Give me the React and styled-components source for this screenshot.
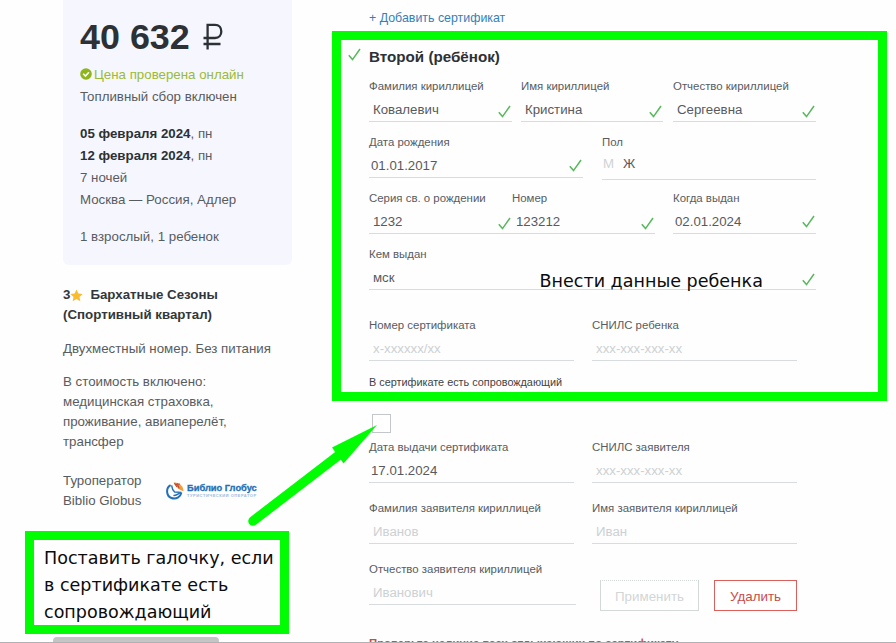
import React from 'react';
import styled, { createGlobalStyle, css } from 'styled-components';

const GlobalStyle = createGlobalStyle`
  * { box-sizing: border-box; }
  body { margin: 0; background: #fefefe; }
`;

const lime = '#00fd02';

const Page = styled.div`
  position: relative;
  display: flex;
  width: 896px;
  height: 643px;
  overflow: hidden;
  background: #fefefe;
  color: #585c61;
  font-family: "Liberation Sans", Arial, sans-serif;
  font-size: 13.3px;
`;

/* ---- Tour summary ---- */

const Sidebar = styled.aside`
  flex: none;
  width: 229px;
  margin-left: 63px;
`;

const Card = styled.section`
  height: 265px;
  padding: 17px 0 0 17px;
  background: #f6f7fe;
  border-radius: 0 0 6px 6px;
`;

const Price = styled.div`
  display: flex;
  gap: 13px;
  height: 40px;
  line-height: 40px;
  margin-bottom: 6px;
  color: #2c3136;
  font-size: 35.9px;
  font-weight: 700;
  white-space: nowrap;
`;

const Currency = styled.svg`
  width: 20px;
  height: 27px;
  margin-top: 6px;
`;

const CardLine = styled.div`
  display: flex;
  align-items: center;
  height: 22px;
  margin-top: ${(p) => p.$gap || 0}px;
  color: ${(p) => p.$color || 'inherit'};
  white-space: pre;
  svg { margin-right: 2px; }
`;

const Strong = styled.b`
  color: #2c3136;
`;

const HotelName = styled.h3`
  margin: 20px 0 0;
  font-size: 13.3px;
  line-height: 20px;
  color: #33373b;
`;

const HotelLine = styled.span`
  display: flex;
  align-items: center;
  height: 20px;
  white-space: nowrap;
`;

const Star = styled.svg`
  width: 13px;
  height: 13px;
  margin: 0 7px 0 0;
`;

const Paragraph = styled.p`
  margin: ${(p) => p.$gap}px 0 0;
  line-height: 20px;
  white-space: pre-line;
`;

const Operator = styled.div`
  display: flex;
  margin-top: 19px;
  line-height: 20px;
`;

const OperatorName = styled.div`
  width: 103px;
  white-space: pre-line;
`;

const Logo = styled.div`
  display: flex;
  gap: 3px;
  margin-top: 11px;
  height: 18px;
`;

const LogoText = styled.div`
  color: #2470b5;
  font-size: 9.3px;
  font-weight: 700;
  line-height: 11px;
  padding-top: 1px;
  white-space: nowrap;
  -webkit-text-stroke: 0.3px #2470b5;
`;

const LogoTagline = styled.div`
  color: #9dbadb;
  font-size: 4px;
  line-height: 4px;
  letter-spacing: 0.53px;
  -webkit-text-stroke: 0;
`;

/* ---- Passenger form ---- */

const Form = styled.main`
  flex: none;
  width: 448px;
  margin-left: 77px;
`;

const AddLink = styled.a`
  display: block;
  margin-top: 10px;
  line-height: 16px;
  font-size: 12.4px;
  color: #3580bb;
`;

const Heading = styled.h2`
  display: flex;
  align-items: center;
  gap: 8px;
  height: 20px;
  margin: 21px 0 0 -21px;
  font-size: 15.2px;
  line-height: 20px;
  color: #2c3136;
  svg { margin-top: -5px; }
`;

const Row = styled.div`
  display: flex;
  height: 44px;
  margin-top: ${(p) => p.$gap}px;
`;

const FieldBox = styled.div`
  flex: none;
  width: ${(p) => p.$width}px;
  margin-right: ${(p) => p.$after || 0}px;
`;

const Label = styled.div`
  line-height: 16px;
  font-size: 11.43px;
  white-space: nowrap;
`;

const Value = styled.div`
  display: flex;
  align-items: center;
  justify-content: space-between;
  height: 28px;
  padding: 4px 1px 0 ${(p) => p.$indent}px;
  border-bottom: 1px solid #d9dcde;
  font-size: 13.25px;
  line-height: 22px;
  color: ${(p) => (p.$placeholder ? '#cdd1d3' : '#575a5e')};
  white-space: nowrap;
`;

const Gender = styled(Value)`
  justify-content: flex-start;
  gap: 9px;
  height: 30px;
  padding: 0 0 2px 1px;
`;

const Muted = styled.span`
  color: #cfd2d4;
`;

const Tick = styled.svg`
  flex: none;
  width: 13px;
  height: 13px;
  margin-top: ${(p) => p.$drop || 0}px;
`;

const CheckCaption = styled.div`
  margin-top: 13px;
  line-height: 16px;
  font-size: 10.85px;
  color: #3f4347;
`;

const Checkbox = styled.div`
  width: 19px;
  height: 19px;
  margin: 24px 0 -11px 3px;
  background: #fff;
  border: 1px solid #c3c7c9;
`;

const Button = styled.button`
  flex: none;
  width: ${(p) => p.$width}px;
  height: 31px;
  margin: 19px 15px 0 0;
  padding: 1px 0 0;
  background: #fff;
  font: 13.36px "Liberation Sans", Arial, sans-serif;
  ${(p) => p.$danger
    ? css`border: 1px solid #d9605c; color: #cb4c47;`
    : css`border: 1px solid #d3d9d9; border-top-style: dotted; color: #d2d6d7;`}
`;

const Warning = styled.div`
  margin-top: 30px;
  line-height: 16px;
  font-size: 11.35px;
  font-weight: 700;
  color: #cf4a46;
  white-space: nowrap;
`;

/* ---- Annotations lying over the page ---- */

const Frame = styled.div`
  position: absolute;
  left: 332px;
  top: 31px;
  width: 555px;
  height: 370px;
  border: 9px solid ${lime};
`;

const Remark = styled.div`
  position: absolute;
  left: 539.5px;
  top: 269px;
  font: 17.55px/24px "DejaVu Sans", Verdana, sans-serif;
  color: #0c0c0c;
  white-space: nowrap;
`;

const Note = styled.div`
  position: absolute;
  left: 25px;
  top: 531px;
  width: 264px;
  height: 103px;
  padding: 5px 0 0 10px;
  border: 9px solid ${lime};
  background: #fefefe;
  font: 17.55px/27px "DejaVu Sans", Verdana, sans-serif;
  color: #0c0c0c;
  white-space: pre;
`;

const Arrow = styled.svg`
  position: absolute;
  left: 240px;
  top: 415px;
  width: 145px;
  height: 120px;
`;

const BottomTab = styled.div`
  position: absolute;
  left: 53px;
  top: 637px;
  width: 166px;
  height: 10px;
  border-radius: 4px 4px 0 0;
  background: #c5c5c5;
`;

const BottomEdge = styled.div`
  position: absolute;
  left: 0;
  right: 0;
  bottom: 0;
  height: 1px;
  background: #b0b3b6;
`;

const Check = ({ drop }) => (
  <Tick viewBox="0 0 13 13" $drop={drop} fill="none">
    <path d="M0.8 7.2 L4.5 11.6 L12 1" stroke="#58b85c" strokeWidth="1.5" />
  </Tick>
);

function Field({ label, value, width, after, indent = 4, checked, drop, placeholder }) {
  return (
    <FieldBox $width={width} $after={after}>
      <Label>{label}</Label>
      <Value $indent={indent} $placeholder={placeholder}>
        <span>{value}</span>
        {checked && <Check drop={drop} />}
      </Value>
    </FieldBox>
  );
}

function Summary() {
  return (
    <Sidebar>
      <Card>
        <Price>
          40 632
          <Currency viewBox="0 0 20 27" fill="none" stroke="#2c3136" strokeWidth="2.3">
            <path d="M4.6 26.5 V1.8 H12 C20.4 1.8 20.4 15 12 15 H0.5 M0.5 21 H17.5" />
          </Currency>
        </Price>
        <CardLine $color="#9bbb32">
          <svg width="12" height="12" viewBox="0 0 12 12" fill="none">
            <circle cx="6" cy="6" r="5.8" fill="#8fb51d" />
            <path d="M3.2 5.8 L5.4 8 L8.9 4.2" stroke="#fff" strokeWidth="1.6" />
          </svg>
          Цена проверена онлайн
        </CardLine>
        <CardLine>Топливный сбор включен</CardLine>
        <CardLine $gap={15}><Strong>05 февраля 2024</Strong>, пн</CardLine>
        <CardLine><Strong>12 февраля 2024</Strong>, пн</CardLine>
        <CardLine>7 ночей</CardLine>
        <CardLine>Москва — Россия, Адлер</CardLine>
        <CardLine $gap={15}>1 взрослый, 1 ребенок</CardLine>
      </Card>
      <HotelName>
        <HotelLine>
          <span>3</span>
          <Star viewBox="0 0 24 24" fill="#fbbb2f">
            <path d="M12 0.8l3.4 7.4 8 .9-5.9 5.5 1.6 8-7.1-4-7.1 4 1.6-8L.6 9.1l8-.9z" />
          </Star>
          <span>Бархатные Сезоны</span>
        </HotelLine>
        <HotelLine>(Спортивный квартал)</HotelLine>
      </HotelName>
      <Paragraph $gap={14}>Двухместный номер. Без питания</Paragraph>
      <Paragraph $gap={13}>
        {'В стоимость включено:\nмедицинская страховка,\nпроживание, авиаперелёт,\nтрансфер'}
      </Paragraph>
      <Operator>
        <OperatorName>{'Туроператор\nBiblio Globus'}</OperatorName>
        <Logo>
          <svg width="18" height="18" viewBox="0 0 18 18" fill="none">
            <path d="M4.6 3.2 C-0.4 6 0 14 5.5 16 C10 17.6 14.6 15 15.4 10.6" stroke="#2470b5" strokeWidth="2" />
            <path d="M5.6 3.4 C6 6.5 7 8.6 8.6 10 L15.4 10.4 C12.5 11 11 14 7.4 13.4" stroke="#2470b5" strokeWidth="1.4" />
            <path d="M7.5 0.6 C13 0 17.5 4 17.5 9.2 L15.5 8.6 C13 7.5 10 5 7.5 0.6z" fill="#efa03c" />
            <path d="M8.5 1.2 L11 5 M11 1.2 L13.2 6.4 M9 2.6 L14 2" stroke="#c4472f" strokeWidth="1.2" />
          </svg>
          <LogoText>
            Библио Глобус
            <LogoTagline>ТУРИСТИЧЕСКИЙ ОПЕРАТОР</LogoTagline>
          </LogoText>
        </Logo>
      </Operator>
    </Sidebar>
  );
}

function PassengerForm() {
  return (
    <Form>
      <AddLink>+ Добавить сертификат</AddLink>
      <Heading><Check />Второй (ребёнок)</Heading>
      <Row $gap={11}>
        <Field label="Фамилия кириллицей" value="Ковалевич" width={143} after={9} checked drop={3} />
        <Field label="Имя кириллицей" value="Кристина" width={142} after={10} checked drop={3} />
        <Field label="Отчество кириллицей" value="Сергеевна" width={143} checked drop={3} />
      </Row>
      <Row $gap={12}>
        <Field label="Дата рождения" value="01.01.2017" width={214} after={19} indent={2} checked />
        <FieldBox $width={214}>
          <Label>Пол</Label>
          <Gender><Muted>М</Muted><span>Ж</span></Gender>
        </FieldBox>
      </Row>
      <Row $gap={12}>
        <Field label="Серия св. о рождении" value="1232" width={143} checked drop={3} />
        <Field label="Номер" value="123212" width={143} after={18} checked drop={3} />
        <Field label="Когда выдан" value="02.01.2024" width={143} indent={2} checked />
      </Row>
      <Row $gap={12}>
        <Field label="Кем выдан" value="мск" width={447} checked drop={3} />
      </Row>
      <Row $gap={27}>
        <Field label="Номер сертификата" value="x-xxxxxx/xx" width={205} after={18} placeholder />
        <Field label="СНИЛС ребенка" value="xxx-xxx-xxx-xx" width={205} placeholder />
      </Row>
      <CheckCaption>В сертификате есть сопровождающий</CheckCaption>
      <Checkbox />
      <Row $gap={17}>
        <Field label="Дата выдачи сертификата" value="17.01.2024" width={205} after={18} indent={2} />
        <Field label="СНИЛС заявителя" value="xxx-xxx-xxx-xx" width={205} placeholder />
      </Row>
      <Row $gap={17}>
        <Field label="Фамилия заявителя кириллицей" value="Иванов" width={205} after={18} placeholder />
        <Field label="Имя заявителя кириллицей" value="Иван" width={205} placeholder />
      </Row>
      <Row $gap={17}>
        <Field label="Отчество заявителя кириллицей" value="Иванович" width={207} after={24} placeholder />
        <Button $width={99}>Применить</Button>
        <Button $width={83} $danger>Удалить</Button>
      </Row>
      <Warning>Проверьте наличие всех отдыхающих по сертификату</Warning>
    </Form>
  );
}

export default function App() {
  return (
    <Page>
      <GlobalStyle />
      <Summary />
      <PassengerForm />
      <Frame />
      <Remark>Внести данные ребенка</Remark>
      <BottomTab />
      <BottomEdge />
      <Note>{'Поставить галочку, если\nв сертификате есть\nсопровождающий'}</Note>
      <Arrow viewBox="240 415 145 120" fill="none">
        <path d="M253 521 L339 455" stroke={lime} strokeWidth="9.5" strokeLinecap="round" />
        <path d="M377 425 L332 447.5 L343.5 463.5z" fill={lime} />
      </Arrow>
    </Page>
  );
}
